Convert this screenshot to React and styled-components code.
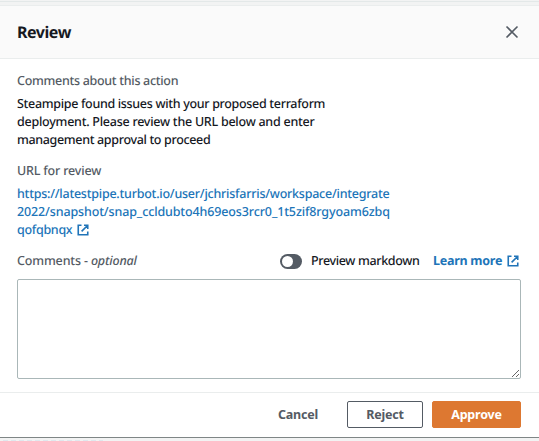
import React from "react";
import styled, { createGlobalStyle } from "styled-components";

const Global = createGlobalStyle`
  * { box-sizing: border-box; }
  body { margin: 0; overflow: hidden; background: #f2f3f3; text-rendering: geometricPrecision; }
`;

const Page = styled.div`
  width: 539px;
  height: 441px;
  overflow: hidden;
  display: flex;
  flex-direction: column;
  font: 500 12.5px/18px "Noto Sans", sans-serif;
  color: #16191f;
`;
const Backdrop = styled.div`
  height: 5px;
  flex: none;
  background: #f2f3f3;
  border-top: 1px solid #f2f3f3;
  box-shadow: inset 0 1px #e3e8e8;
`;
const Modal = styled.section`
  height: 433px;
  flex: none;
  display: flex;
  flex-direction: column;
  background: #fff;
  border-top: 1px solid #eaeded;
  border-bottom: 1px solid #7f8686;
`;
const BackdropEdge = styled.div`
  width: 100px;
  height: 1px;
  flex: none;
  margin: 2px 0 0 3px;
  background: repeating-linear-gradient(90deg, #dfe8ee 0 5px, #f2f3f3 5px 8px);
`;
const Header = styled.header`
  height: 53px;
  flex: none;
  display: flex;
  align-items: center;
  justify-content: space-between;
  padding: 0 20px 0 17px;
  background: #fafafa;
  border-bottom: 1px solid #eaeded;
`;
const Title = styled.h2`
  margin: 0;
  font-size: 16px;
  line-height: 22px;
  font-weight: 700;
  letter-spacing: ${(p) => p.$ls}px;
`;
const IconButton = styled.button`
  display: flex;
  padding: 0;
  border: 0;
  background: none;
  color: #545b64;
`;
const Body = styled.div`
  flex: 1;
  padding: 13px 18px 0 17px;
`;
const Label = styled.div`
  height: 18px;
  color: #545b64;
  white-space: nowrap;
  letter-spacing: ${(p) => p.$ls || 0}px;
`;
const Value = styled.div`
  margin: 5px 0 13px;
`;
const Line = styled.span`
  display: block;
  height: 18px;
  white-space: nowrap;
  letter-spacing: ${(p) => p.$ls || 0}px;
`;
const Link = styled.a`
  display: block;
  color: #2074b8;
`;
const LinkEnd = styled.span`
  display: flex;
  align-items: center;
  gap: 5px;
`;
const FieldRow = styled.div`
  display: flex;
  height: 18px;
  align-items: center;
`;
const Tools = styled.div`
  display: flex;
  align-items: center;
  margin-left: auto;
  padding-right: 2px;
`;
const Toggle = styled.span`
  width: 22px;
  height: 15px;
  padding: 2px;
  margin: 1px 9px 0 0;
  border-radius: 8px;
  background: #545b64;
  &::before {
    content: "";
    display: block;
    width: 11px;
    height: 11px;
    border-radius: 50%;
    background: #fff;
  }
`;
const ToggleLabel = styled.span`
  width: 122px;
  white-space: nowrap;
  letter-spacing: ${(p) => p.$ls}px;
`;
const LearnMore = styled.a`
  display: flex;
  align-items: center;
  justify-content: space-between;
  width: 86px;
  color: #2074b8;
  font-weight: 700;
  white-space: nowrap;
  letter-spacing: ${(p) => p.$ls}px;
`;
const TextArea = styled.textarea`
  display: block;
  width: 504px;
  height: 100px;
  margin-top: 9px;
  border: 1px solid #aab7b8;
  border-radius: 2px;
  background: #fff;
  resize: both;
  outline: 0;
`;
const Footer = styled.footer`
  height: 45px;
  flex: none;
  display: flex;
  align-items: flex-start;
  justify-content: flex-end;
  padding: 8px 18px 0 0;
  border-top: 1px solid #eaeded;
`;
const Button = styled.button`
  width: ${(p) => p.$w}px;
  height: 27px;
  margin-left: 9px;
  padding: 1px 0 0;
  border: 1px solid ${(p) => p.$border || "transparent"};
  border-radius: 2px;
  background: ${(p) => p.$bg || "transparent"};
  color: ${(p) => p.$color || "#545b64"};
  font: 700 12.5px/18px "Noto Sans", sans-serif;
  letter-spacing: -0.2px;
`;

const External = () => (
  <svg width="12" height="12" viewBox="0 0 12 12" fill="none" stroke="currentColor" strokeWidth="1.6">
    <path d="M4.5 1.25H1.25v9.5h9.5V7.5M7 1.25h3.75V5M10.5 1.5 4.6 7.4" />
  </svg>
);

export default function App() {
  return (
    <Page>
      <Global />
      <Backdrop />
      <Modal>
        <Header>
          <Title $ls={-0.45}>Review</Title>
          <IconButton aria-label="Close">
            <svg width="14" height="14" viewBox="0 0 14 14" stroke="currentColor" strokeWidth="1.6">
              <path d="M1.5 1.5l11 11M12.5 1.5l-11 11" />
            </svg>
          </IconButton>
        </Header>
        <Body>
          <Label $ls={-0.3}>Comments about this action</Label>
          <Value>
            <Line $ls={-0.32}>Steampipe found issues with your proposed terraform</Line>
            <Line $ls={-0.25}>deployment. Please review the URL below and enter</Line>
            <Line $ls={-0.34}>management approval to proceed</Line>
          </Value>
          <Label $ls={-0.18}>URL for review</Label>
          <Value>
            <Link>
              <Line $ls={-0.24}>https://latestpipe.turbot.io/user/jchrisfarris/workspace/integrate</Line>
              <Line $ls={-0.13}>2022/snapshot/snap_ccldubto4h69eos3rcr0_1t5zif8rgyoam6zbq</Line>
              <LinkEnd><Line $ls={-0.3}>qofqbnqx</Line><External /></LinkEnd>
            </Link>
          </Value>
          <FieldRow>
            <Label $ls={-0.16}>Comments - <em>optional</em></Label>
            <Tools>
              <Toggle />
              <ToggleLabel $ls={-0.36}>Preview markdown</ToggleLabel>
              <LearnMore $ls={-0.26}>Learn more<External /></LearnMore>
            </Tools>
          </FieldRow>
          <TextArea aria-label="Comments" />
        </Body>
        <Footer>
          <Button $w={80}>Cancel</Button>
          <Button $w={76} $border="#545b64">Reject</Button>
          <Button $w={89} $bg="#dd7831" $border="#dd7831" $color="#fff">Approve</Button>
        </Footer>
      </Modal>
      <BackdropEdge />
    </Page>
  );
}
